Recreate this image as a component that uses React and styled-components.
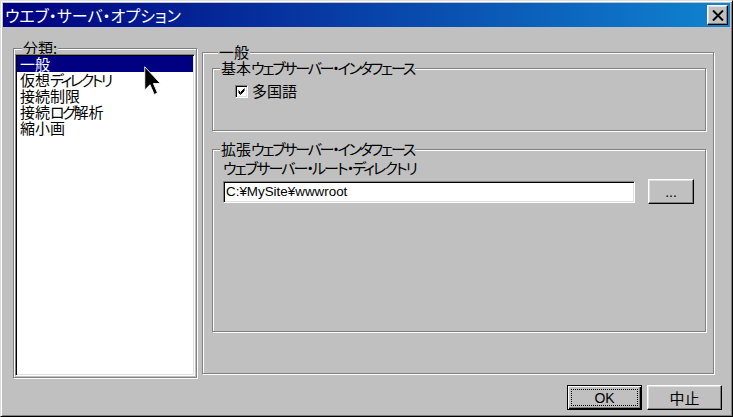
import React from "react";
import styled, { createGlobalStyle } from "styled-components";

const Global = createGlobalStyle`
  html, body { margin: 0; padding: 0; background: #c0c0c0; }
  * { box-sizing: border-box; }
`;

const jp = `"Noto Sans CJK JP", "Noto Sans", sans-serif`;

const Window = styled.div`
  position: relative;
  width: 733px;
  height: 417px;
  background: #c0c0c0;
  border: 1px solid;
  border-color: #dfdfdf #000 #000 #dfdfdf;
  box-shadow: inset 1px 1px #fff, inset -1px -1px #808080;
  padding: 2px;
  display: flex;
  flex-direction: column;
  font-family: ${jp};
  color: #000;
`;

const TitleBar = styled.div`
  height: 24px;
  flex: none;
  display: flex;
  align-items: center;
  justify-content: space-between;
  padding: 0 2px 0 2px;
  background: linear-gradient(to right, #000080, #1084d0);
`;

const Title = styled.div`
  color: #fff;
  font-size: 16px;
  line-height: 20px;
  font-family: ${jp};
  font-feature-settings: "palt";
`;

const CloseButton = styled.div`
  width: 21px;
  height: 20px;
  background: #c0c0c0;
  border: 1px solid;
  border-color: #fff #000 #000 #fff;
  box-shadow: inset -1px -1px #808080, inset 1px 1px #dfdfdf;
  display: flex;
  align-items: center;
  justify-content: center;
`;

const Body = styled.div`
  position: relative;
  flex: 1;
  display: flex;
  flex-direction: column;
  padding: 0 8px 4px 10px;
`;

const Main = styled.div`
  flex: 1;
  display: flex;
  align-items: flex-start;
`;

const Group = styled.div`
  display: flex;
  flex-direction: column;
  border: 1px solid #808080;
  box-shadow: 1px 1px 0 #fff, inset 1px 1px 0 #fff;
  width: ${(p) => (p.$w ? `${p.$w}px` : "auto")};
  height: ${(p) => p.$h}px;
  margin: ${(p) => p.$m || "0"};
  padding: ${(p) => p.$pad || "0"};
`;

const GroupLabel = styled.div`
  align-self: flex-start;
  margin: -9px 0 0 ${(p) => p.$x}px;
  padding: 0 1px;
  background: #c0c0c0;
  font-size: 15px;
  line-height: 16px;
  height: 16px;
  white-space: nowrap;
  font-feature-settings: "palt";
`;

const Kana = styled.span`
  letter-spacing: ${(p) => p.$ls ?? -2.2}px;
`;

const ListBox = styled.div`
  flex: 1;
  margin-top: -2px;
  background: #fff;
  border: 1px solid;
  border-color: #808080 #fff #fff #808080;
  box-shadow: inset 1px 1px #000, inset -1px -1px #dfdfdf;
  padding: 1px;
`;

const ListItem = styled.div`
  height: 16px;
  line-height: 16px;
  padding-left: 3px;
  font-size: 15px;
  white-space: nowrap;
  font-feature-settings: "palt";
  background: ${(p) => (p.$sel ? "#000080" : "transparent")};
  color: ${(p) => (p.$sel ? "#fff" : "#000")};
`;

const CheckRow = styled.label`
  display: flex;
  align-items: center;
  gap: 4px;
  margin: 7px 0 0 22px;
  font-size: 15px;
  line-height: 16px;
`;

const CheckBox = styled.span`
  width: 13px;
  height: 13px;
  background: #fff;
  border: 1px solid;
  border-color: #808080 #fff #fff #808080;
  box-shadow: inset 1px 1px #000, inset -1px -1px #dfdfdf;
  display: flex;
  align-items: center;
  justify-content: center;
`;

const FieldLabel = styled.div`
  margin: 3px 0 0 10px;
  font-size: 15px;
  line-height: 16px;
  height: 16px;
  white-space: nowrap;
  font-feature-settings: "palt";
`;

const InputRow = styled.div`
  display: flex;
  align-items: center;
  gap: 13px;
  margin: 3px 0 0 10px;
  height: 25px;
`;

const TextBox = styled.div`
  width: 412px;
  height: 22px;
  background: #fff;
  border: 1px solid;
  border-color: #808080 #fff #fff #808080;
  box-shadow: inset 1px 1px #000, inset -1px -1px #dfdfdf;
  padding: 0 2px;
  font-family: "Liberation Sans", Arial, sans-serif;
  font-size: 13.4px;
  line-height: 20px;
`;

const Button = styled.div`
  position: relative;
  width: ${(p) => p.$w}px;
  height: 25px;
  background: #c0c0c0;
  border: 1px solid;
  border-color: ${(p) => (p.$def ? "#000" : "#fff #000 #000 #fff")};
  box-shadow: ${(p) =>
    p.$def
      ? "inset 1px 1px #fff, inset -1px -1px #000, inset -2px -2px #808080"
      : "inset -1px -1px #808080, inset 1px 1px #dfdfdf"};
  display: flex;
  align-items: center;
  justify-content: center;
  font-size: ${(p) => (p.$latin ? 14 : 15)}px;
  line-height: 16px;
  font-family: ${(p) => (p.$latin ? `"Liberation Sans", Arial, sans-serif` : jp)};
`;

const FocusRect = styled.div`
  position: absolute;
  inset: 3px;
  border: 1px dotted #000;
`;

const ButtonRow = styled.div`
  display: flex;
  justify-content: flex-end;
  gap: 5px;
  flex: none;
`;

const Cursor = styled.svg`
  position: absolute;
  left: 141px;
  top: 39px;
`;

const items = [
  ["一般"],
  ["仮想", "ディレクトリ"],
  ["接続制限"],
  ["接続", "ログ", "解析"],
  ["縮小画"],
];

function Mixed({ parts }) {
  return parts.map((p, i) =>
    /[\u30a0-\u30ff]/.test(p) ? (
      <Kana key={i} $ls={-2.4}>
        {p}
      </Kana>
    ) : (
      <span key={i}>{p}</span>
    )
  );
}

export default function App() {
  return (
    <>
      <Global />
      <Window>
        <TitleBar>
          <Title>ウエブ・サーバ・オプション</Title>
          <CloseButton>
            <svg width="12" height="11" viewBox="0 0 12 11">
              <path d="M1 0.5 L11 10.5 M11 0.5 L1 10.5" stroke="#000" strokeWidth="2" />
            </svg>
          </CloseButton>
        </TitleBar>
        <Body>
          <Main>
            <Group $w={184} $h={330} $m="21px 0 0 0" $pad="0 1px 1px 1px">
              <GroupLabel $x={7}>分類:</GroupLabel>
              <ListBox>
                {items.map((t, i) => (
                  <ListItem key={i} $sel={i === 0}>
                    <Mixed parts={t} />
                  </ListItem>
                ))}
              </ListBox>
            </Group>
            <Group $w={512} $h={322} $m="25px 0 0 5px" $pad="0 7px 0 9px">
              <GroupLabel $x={6}>一般</GroupLabel>
              <Group $h={63} $m="8px 0 0 0">
                <GroupLabel $x={7}>
                  基本<Kana>ウェブサーバー・インタフェース</Kana>
                </GroupLabel>
                <CheckRow>
                  <CheckBox>
                    <svg width="7" height="7" viewBox="0 0 7 7">
                      <path d="M0.5 2.5 L2.5 4.5 L6.5 0.5 M0.5 3.5 L2.5 5.5 L6.5 1.5 M0.5 4.5 L2.5 6.5 L6.5 2.5" stroke="#000" strokeWidth="1" fill="none" />
                    </svg>
                  </CheckBox>
                  多国語
                </CheckRow>
              </Group>
              <Group $h={183} $m="18px 0 0 0">
                <GroupLabel $x={7}>
                  拡張<Kana>ウェブサーバー・インタフェース</Kana>
                </GroupLabel>
                <FieldLabel>
                  <Kana $ls={-1.9}>ウェブサーバー・ルート・ディレクトリ</Kana>
                </FieldLabel>
                <InputRow>
                  <TextBox>C:¥MySite¥wwwroot</TextBox>
                  <Button $w={46} $latin>...</Button>
                </InputRow>
              </Group>
            </Group>
          </Main>
          <ButtonRow>
            <Button $w={75} $def $latin>
              <FocusRect />
              OK
            </Button>
            <Button $w={75}>中止</Button>
          </ButtonRow>
          <Cursor width="18" height="30" viewBox="0 0 12 20">
            <path d="M0.5 0.5 L0.5 16 L4 12.5 L6.8 19 L9 18 L6.3 11.7 L11 11.7 Z" fill="#000" stroke="#fff" strokeWidth="0.6" />
          </Cursor>
        </Body>
      </Window>
    </>
  );
}
